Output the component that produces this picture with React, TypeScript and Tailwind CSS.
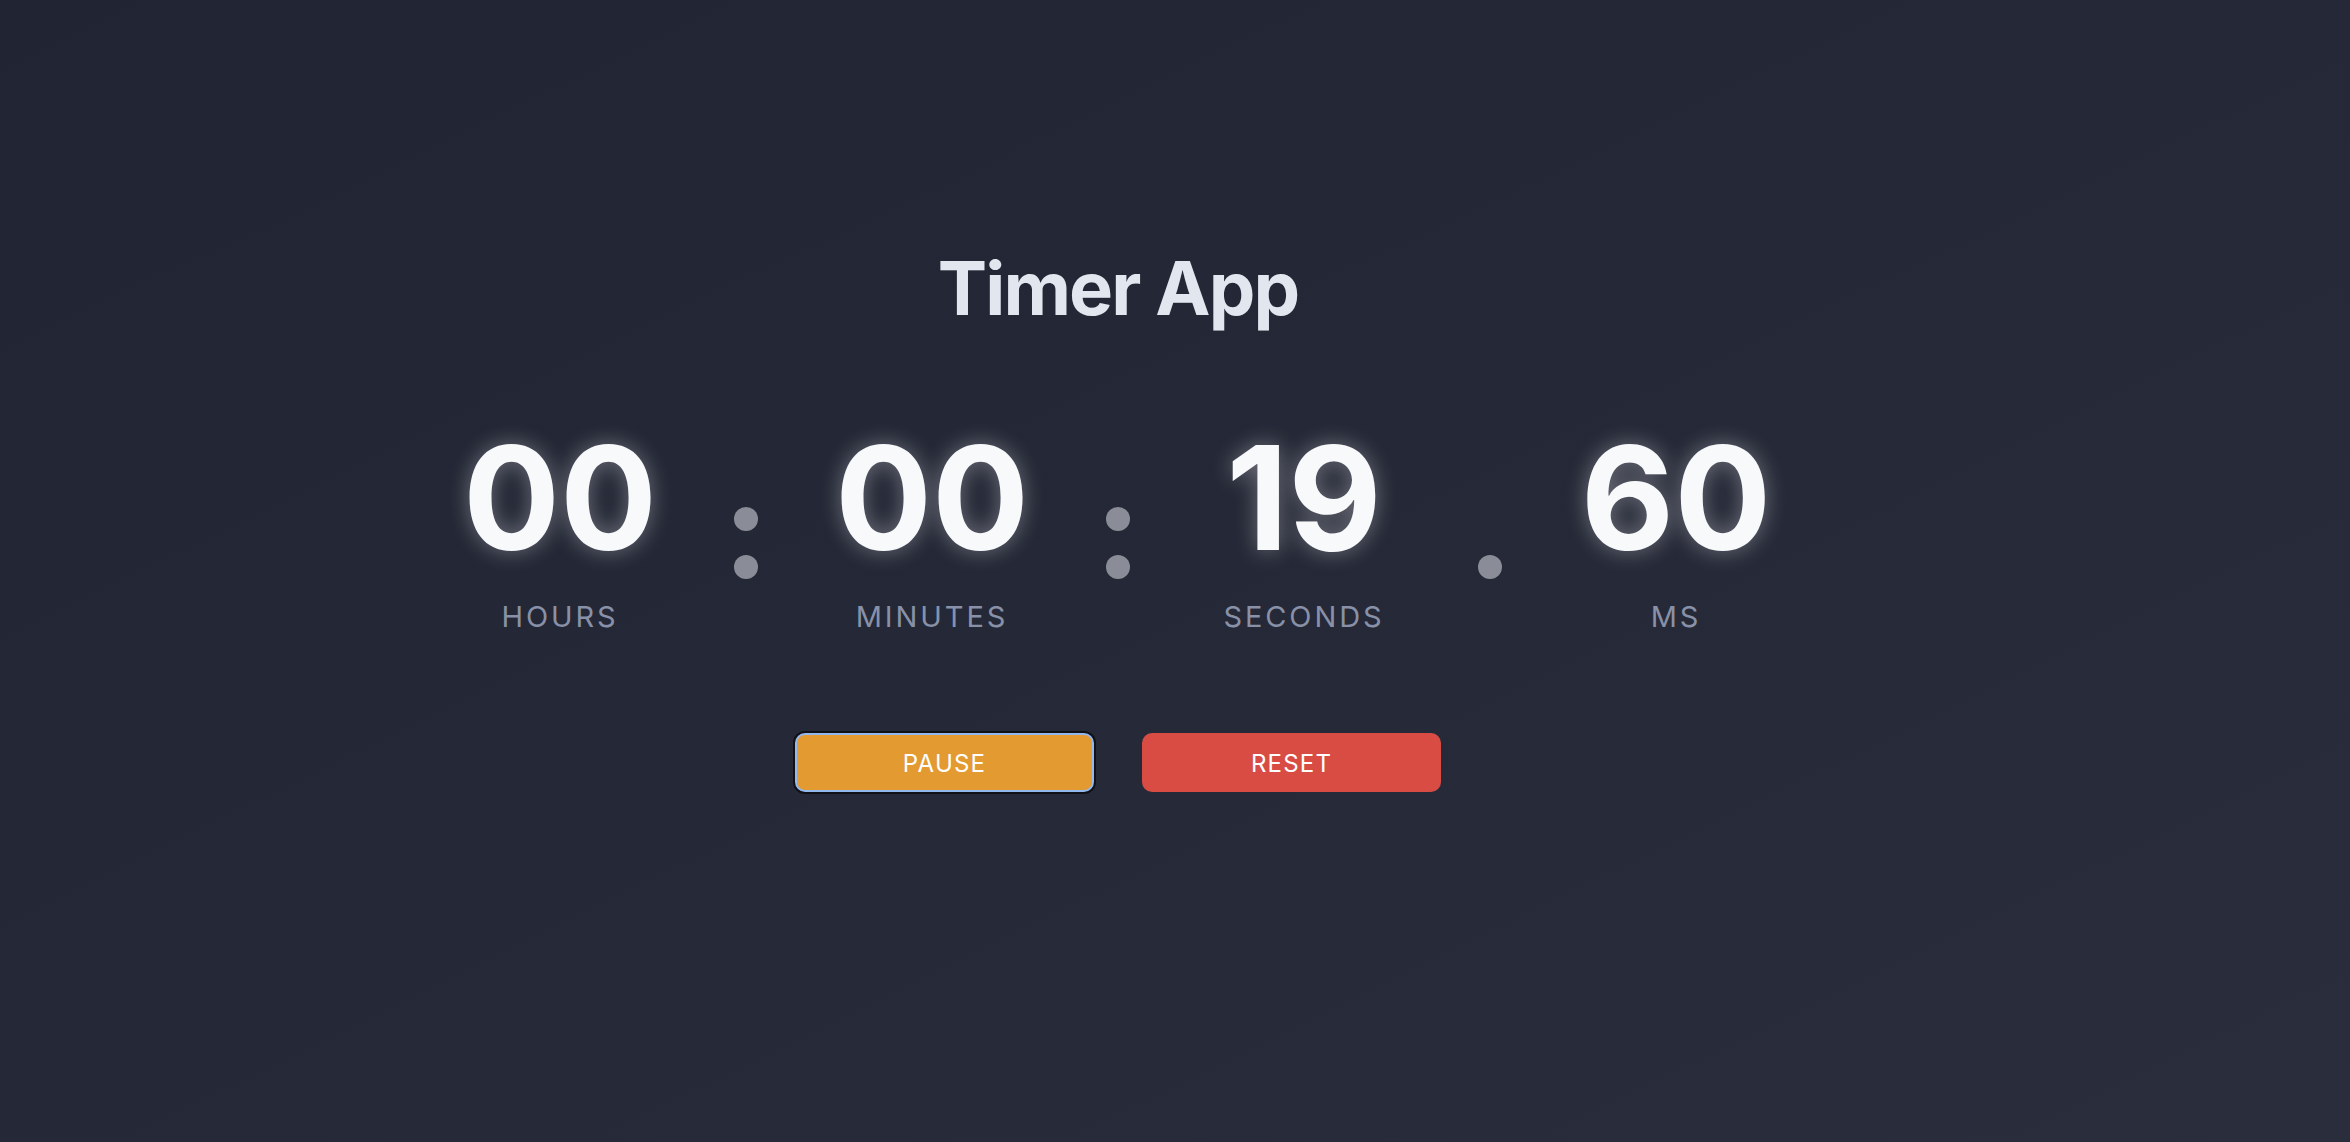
import { useState } from 'react';

const units = [
  { value: '00', label: 'HOURS' },
  { value: '00', label: 'MINUTES' },
  { value: '19', label: 'SECONDS' },
  { value: '60', label: 'MS' },
];

function Separator({ single }: { single?: boolean }) {
  return (
    <div className={`flex w-[24px] flex-col gap-[24px] ${single ? 'pt-[129px]' : 'pt-[81px]'}`}>
      {!single && <div className="h-[24px] w-[24px] rounded-full bg-[#8a8d97]" />}
      <div className="h-[24px] w-[24px] rounded-full bg-[#8a8d97]" />
    </div>
  );
}

export default function App() {
  const [running, setRunning] = useState(true);

  return (
    <div className="min-h-[1142px] w-full bg-gradient-to-br from-[#212533] via-[#252937] to-[#2a2d3c] font-['Inter','Liberation_Sans',sans-serif]">
      <div className="flex flex-col items-center pt-[251px] pr-[114px]">
        {/* Title */}
        <h1 className="text-[74px] leading-none font-bold tracking-tight text-[#e2e6ef]">Timer App</h1>

        {/* Clock */}
        <div className="mt-[101px] flex items-start gap-[49px]">
          {units.map((unit, idx) => (
            <div key={unit.label} className="flex items-start gap-[49px]">
              {idx > 0 && <Separator single={idx === 3} />}
              <div className="flex w-[250px] flex-col items-center">
                <div className="text-[144px] leading-none font-bold text-[#f8f9fb] [text-shadow:0_0_22px_rgba(255,255,255,0.35)]">
                  {unit.value}
                </div>
                <div className="mt-[32px] text-[29px] leading-none tracking-[0.1em] text-[#8891a8]">
                  {unit.label}
                </div>
              </div>
            </div>
          ))}
        </div>

        {/* Controls */}
        <div className="mt-[102px] flex gap-[48px]">
          <button
            onClick={() => setRunning(!running)}
            className="h-[59px] w-[299px] rounded-[10px] border-2 border-[#93b8ee] bg-[#e39a30] pt-[2px] text-[24px] font-normal tracking-wider text-white shadow-[0_0_0_2px_#0f1116]"
          >
            {running ? 'PAUSE' : 'START'}
          </button>
          <button className="h-[59px] w-[299px] rounded-[10px] border-2 border-transparent bg-[#d84c44] pt-[2px] text-[24px] font-normal tracking-wider text-white">
            RESET
          </button>
        </div>
      </div>
    </div>
  );
}
